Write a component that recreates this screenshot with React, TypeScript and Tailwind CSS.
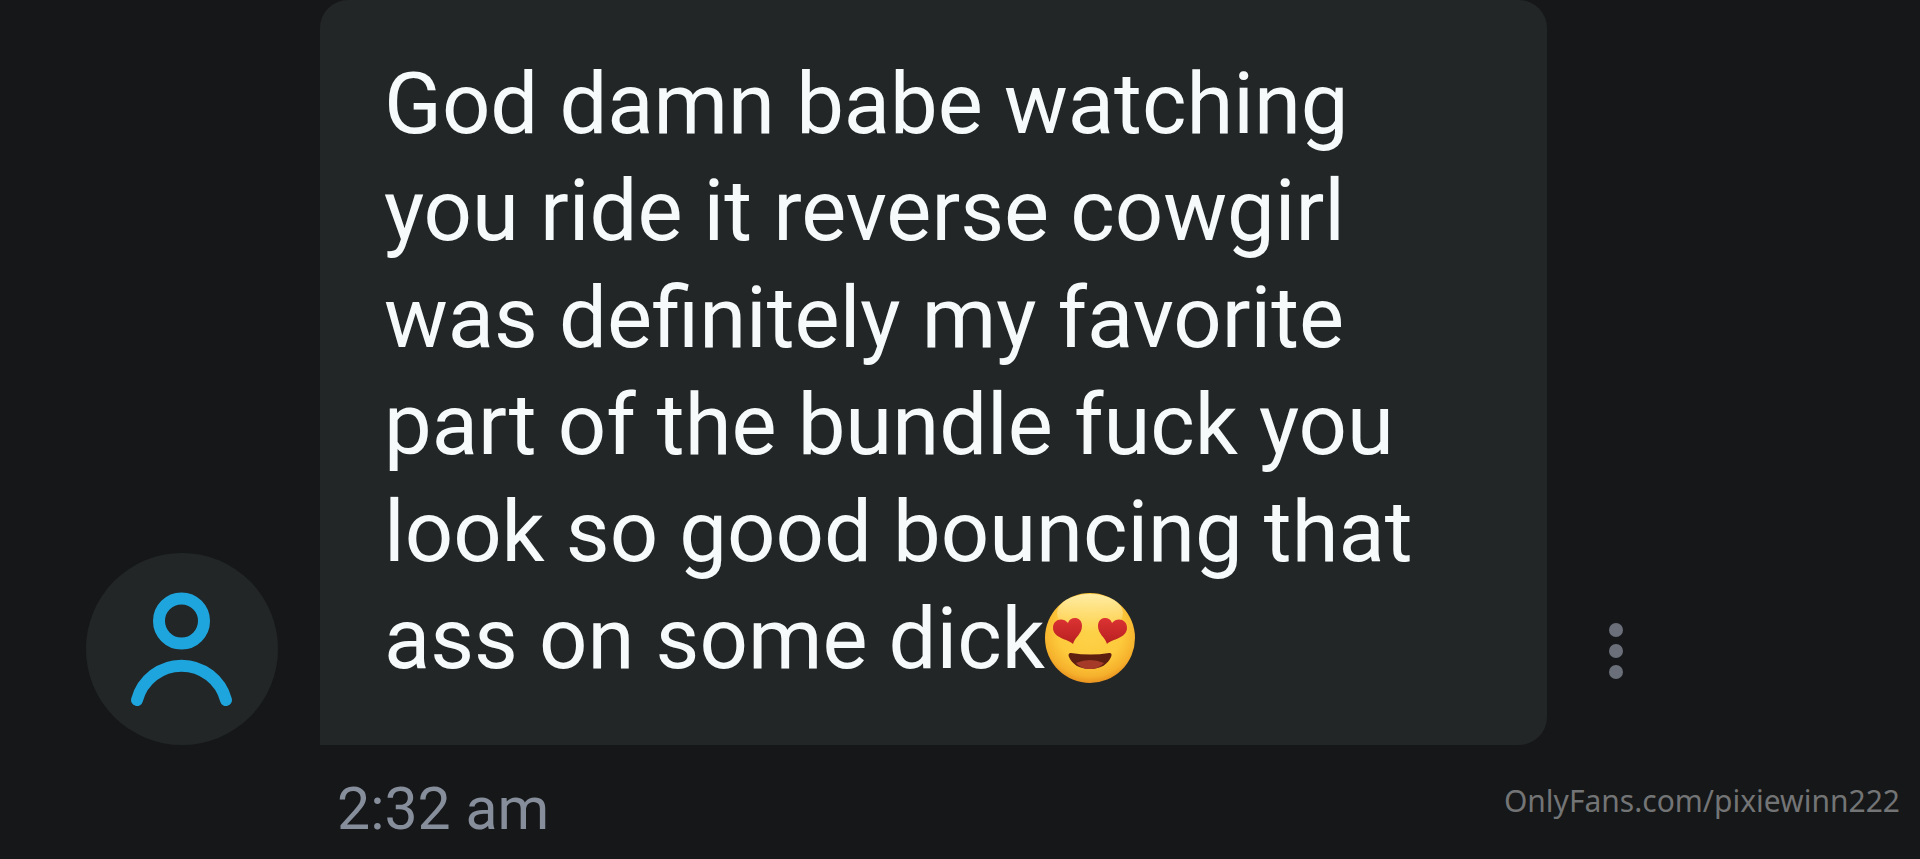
import React from 'react';

const message = {
  text: 'God damn babe watching you ride it reverse cowgirl was definitely my favorite part of the bundle fuck you look so good bouncing that ass on some dick',
  time: '2:32 am',
};

const HeartEyes = () => (
  <svg viewBox="0 0 90 90" role="img" aria-label="Smiling face with heart eyes" className="inline-block size-[90px] align-[-15px]">
    <defs>
      <radialGradient id="face" cx="50%" cy="40%" r="62%">
        <stop offset="0%" stopColor="#fdd34a" />
        <stop offset="60%" stopColor="#fdca3c" />
        <stop offset="85%" stopColor="#f6b12c" />
        <stop offset="100%" stopColor="#e58a1c" />
      </radialGradient>
      <linearGradient id="shine" x1="0" y1="0" x2="0" y2="1">
        <stop offset="0%" stopColor="#fff3b8" stopOpacity="0.85" />
        <stop offset="100%" stopColor="#fff3b8" stopOpacity="0" />
      </linearGradient>
      <linearGradient id="heart" x1="0" y1="0" x2="0" y2="1">
        <stop offset="0%" stopColor="#dc3333" />
        <stop offset="100%" stopColor="#b81f20" />
      </linearGradient>
    </defs>
    <circle cx="45" cy="45" r="45" fill="url(#face)" />
    <ellipse cx="45" cy="20" rx="33" ry="19" fill="url(#shine)" />
    <path d="M28 51C23 46 8 45 8 35c0-9 10-11 15-5 2-7 14-7 14 3 0 8-7 11-9 18Z" fill="url(#heart)" />
    <path d="M62 51C67 46 82 45 82 35c0-9-10-11-15-5-2-7-14-7-14 3 0 8 7 11 9 18Z" fill="url(#heart)" />
    <path d="M26 60q20 3 38 0c3 0 3 2 2 4-3 7-10 12-21 12s-18-5-21-12c-1-3 0-4 2-4Z" fill="#5f1f10" />
    <path d="M31 70q14-6 28 0c-4 4-8 6-14 6s-10-2-14-6Z" fill="#a53a28" />
  </svg>
);

const Avatar = () => (
  <div className="flex-shrink-0 size-48 rounded-full bg-[#222627]">
    <svg viewBox="0 0 192 192" fill="none" stroke="#1fa5de" strokeWidth="12" strokeLinecap="round" className="w-full h-full" role="img" aria-label="User">
      <circle cx="95.5" cy="68" r="22.5" />
      <path d="M51 147A46 46 0 0 1 140 147" />
    </svg>
  </div>
);

const App = () => {
  return (
    <main className="min-h-screen bg-[#161718] font-['Roboto','Liberation_Sans',sans-serif]">
      <div className="flex items-end pl-[86px] pr-10">
        <Avatar />
        <p className="ml-[42px] w-full max-w-[1227px] px-16 pt-[51px] pb-[52px] rounded-[28px] rounded-bl-none bg-[#222627] text-[#f7fafa] text-[85px] leading-[107px]">
          {message.text}
          <HeartEyes />
        </p>
        <button type="button" aria-label="Message options" className="flex flex-col items-center gap-[7px] ml-12 mb-[66px] px-[14px] cursor-pointer">
          <span className="size-[14px] rounded-full bg-[#6b6f7a]" />
          <span className="size-[14px] rounded-full bg-[#6b6f7a]" />
          <span className="size-[14px] rounded-full bg-[#6b6f7a]" />
        </button>
      </div>
      <div className="flex items-start justify-between pl-[337px] pr-5 pt-[29px]">
        <time className="text-[59px] leading-[70px] text-[#868e9b]">{message.time}</time>
        <a href="#" className="mt-1.5 text-[30px] leading-[42px] text-[#737475] font-['Noto_Sans','Open_Sans',sans-serif]">
          OnlyFans.com/pixiewinn222
        </a>
      </div>
    </main>
  );
};

export default App;
